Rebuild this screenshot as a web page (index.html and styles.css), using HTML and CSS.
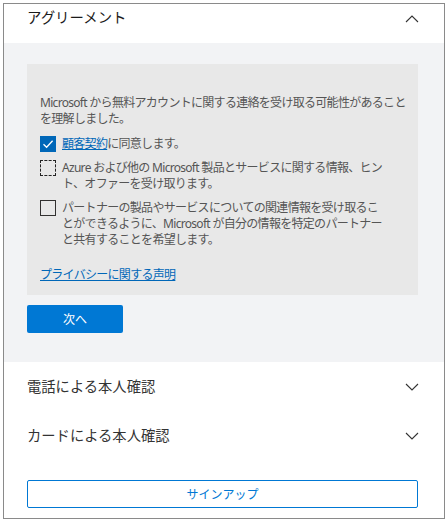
FILE: index.html
```html
<!DOCTYPE html>
<html lang="ja">
<head>
<meta charset="utf-8">
<link rel="stylesheet" href="styles.css">
</head>
<body>
<div class="frame">
  <div class="header">
    <span class="title">アグリーメント</span>
    <svg class="chev" width="14" height="8" viewBox="0 0 14 8"><path d="M1 7 L7 1 L13 7" fill="none" stroke="#333" stroke-width="1.1"/></svg>
  </div>
  <div class="section">
    <div class="box">
      <p class="para">Microsoft から無料アカウントに関する連絡を受け取る可能性があること<br>を理解しました。</p>
      <div class="row first">
        <span class="cb checked"><svg width="16" height="16" viewBox="0 0 16 16"><path d="M3.5 8.2 L6.6 11.2 L12.6 4.8" fill="none" stroke="#fff" stroke-width="1.3"/></svg></span>
        <span class="label"><a class="link" href="#">顧客契約</a>に同意します。</span>
      </div>
      <div class="row">
        <span class="cb focus"></span>
        <span class="label">Azure および他の Microsoft 製品とサービスに関する情報、ヒン<br>ト、オファーを受け取ります。</span>
      </div>
      <div class="row">
        <span class="cb"></span>
        <span class="label">パートナーの製品やサービスについての関連情報を受け取るこ<br>とができるように、Microsoft が自分の情報を特定のパートナー<br>と共有することを希望します。</span>
      </div>
      <a class="link privacy" href="#">プライバシーに関する声明</a>
    </div>
    <button class="btn-primary">次へ</button>
  </div>
  <div class="item">
    <span class="item-title">電話による本人確認</span>
    <svg class="chev" width="14" height="8" viewBox="0 0 14 8"><path d="M1 1 L7 7 L13 1" fill="none" stroke="#333" stroke-width="1.1"/></svg>
  </div>
  <div class="item">
    <span class="item-title">カードによる本人確認</span>
    <svg class="chev" width="14" height="8" viewBox="0 0 14 8"><path d="M1 1 L7 7 L13 1" fill="none" stroke="#333" stroke-width="1.1"/></svg>
  </div>
  <div class="footer">
    <button class="btn-outline">サインアップ</button>
  </div>
</div>
</body>
</html>
```

FILE: styles.css
```css
* { box-sizing: border-box; }
html, body { margin: 0; padding: 0; background: #fff; }
body {
  font-family: "Noto Sans", "Noto Sans CJK JP", sans-serif;
  color: #1b1b1b;
}
.frame {
  margin: 3px 0 0 3px;
  width: 442px;
  height: 516px;
  border: 1px solid #8a8a8a;
  display: flex;
  flex-direction: column;
}
.header {
  height: 39px;
  padding: 3px 25px 0 23px;
  display: flex;
  justify-content: space-between;
  align-items: flex-start;
}
.title {
  font-size: 14.4px;
  line-height: 22px;
  color: #1b1b1b;
}
.header .chev { margin-top: 8px; }
.chev { display: block; }
.section {
  background: #f2f3f5;
  padding: 21px 26px 29px 23px;
}
.box {
  background: #e8e8e8;
  padding: 31px 13px 12px 13px;
  display: flex;
  flex-direction: column;
  align-items: flex-start;
}
.para, .label, .privacy {
  font-size: 12px;
  letter-spacing: -0.7px;
  line-height: 16px;
  color: #555;
  white-space: nowrap;
}
.para { margin: 0; }
.row {
  display: flex;
  align-items: flex-start;
  gap: 6px;
  margin-top: 8px;
}
.row.first { margin-top: 9px; }
.cb {
  width: 16px;
  height: 16px;
  flex: none;
  border: 1px solid #323130;
  background: transparent;
  display: block;
}
.cb.checked {
  background: #0067b8;
  border-color: #0067b8;
  position: relative;
}
.cb.checked svg { position: absolute; left: -1px; top: -1px; }
.cb.focus { border: 1px dashed #222; }
.link {
  color: #0067b8;
  text-decoration: underline;
}
.privacy {
  color: #0067b8;
  margin-top: 19px;
}
.btn-primary {
  margin-top: 10px;
  width: 96px;
  height: 28px;
  border: none;
  border-radius: 2px;
  background: #0078d4;
  color: #fff;
  font-family: "Noto Sans", "Noto Sans CJK JP", sans-serif;
  font-size: 12px;
  padding: 0;
}
.item {
  height: 49px;
  padding: 0 25px 0 23px;
  display: flex;
  justify-content: space-between;
  align-items: center;
}
.item-title {
  font-size: 14.3px;
  line-height: 22px;
  color: #333;
}
.footer {
  padding: 20px 26px 0 23px;
}
.btn-outline {
  width: 391px;
  height: 28px;
  border: 1px solid #0078d4;
  border-radius: 2px;
  background: #fff;
  color: #0078d4;
  font-family: "Noto Sans", "Noto Sans CJK JP", sans-serif;
  font-size: 12px;
  padding: 0;
}
```
